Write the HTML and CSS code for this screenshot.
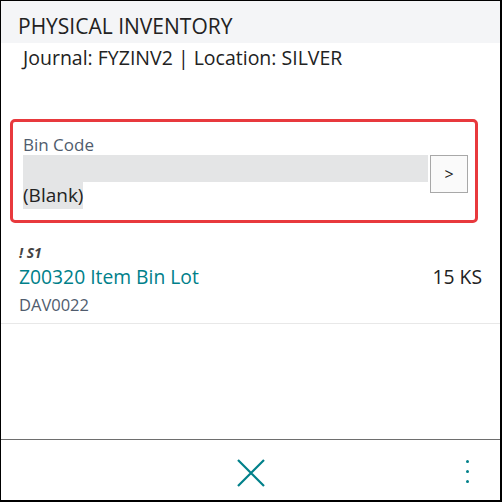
FILE: index.html
```html
<!DOCTYPE html>
<html lang="en">
<head>
  <meta charset="UTF-8">
  <title>Physical Inventory</title>
  <link rel="stylesheet" href="styles.css">
</head>
<body>
  <div class="frame">
    <div class="header">PHYSICAL INVENTORY</div>
    <div class="subtitle">Journal: FYZINV2 | Location: SILVER</div>

    <div class="bin-box">
      <div class="bin-label">Bin Code</div>
      <div class="bin-row">
        <div class="bin-field">
          <div class="bin-fill"></div>
          <span class="bin-value">(Blank)</span>
        </div>
        <button class="bin-btn">&gt;</button>
      </div>
    </div>

    <div class="item">
      <div class="item-tag">! S1</div>
      <div class="item-row">
        <span class="item-name">Z00320 Item Bin Lot</span>
        <span class="item-qty">15 KS</span>
      </div>
      <div class="item-lot">DAV0022</div>
    </div>

    <div class="spacer"></div>

    <div class="footer">
      <svg class="close-icon" width="28" height="28" viewBox="0 0 28 28">
        <path d="M1 1 L27 27 M27 1 L1 27" stroke="#00808a" stroke-width="2.2" fill="none"/>
      </svg>
      <div class="more">
        <span></span><span></span><span></span>
      </div>
    </div>
  </div>
</body>
</html>
```

FILE: styles.css
```css
html, body {
  margin: 0;
  padding: 0;
  background: #fff;
}
body {
  font-family: 'Open Sans', 'Noto Sans', sans-serif;
  color: #212121;
}
.frame {
  width: 502px;
  height: 502px;
  box-sizing: border-box;
  border-style: solid;
  border-color: #000;
  border-width: 1px 2px 2px 1px;
  display: flex;
  flex-direction: column;
}
.header {
  background: #f4f5f7;
  height: 42px;
  line-height: 50px;
  padding-left: 17px;
  font-size: 21px;
  color: #222;
  overflow: hidden;
}
.subtitle {
  padding-left: 22px;
  font-size: 19.5px;
  line-height: 30px;
  color: #222;
}
.bin-box {
  margin: 46px 22px 0 9px;
  border: 3px solid #e8393d;
  border-radius: 5px;
  padding: 12px 7px 11px 10px;
}
.bin-label {
  font-size: 17px;
  color: #505c6d;
  line-height: 21px;
}
.bin-row {
  display: flex;
  align-items: flex-start;
}
.bin-field {
  flex: 1;
}
.bin-fill {
  height: 27px;
  background: #e4e5e6;
}
.bin-value {
  display: inline-block;
  background: #e4e5e6;
  font-size: 19px;
  line-height: 27px;
  color: #222;
}
.bin-btn {
  width: 38px;
  height: 38px;
  margin-left: 2px;
  border: 1px solid #a8a8a8;
  background: #fafafa;
  font-family: 'Open Sans', sans-serif;
  font-size: 16px;
  color: #222;
  padding: 0;
}
.item {
  margin-top: 20px;
  padding: 0 18px 4px 18px;
  border-bottom: 1px solid #e8e8e8;
}
.item-tag {
  font-size: 14px;
  font-weight: bold;
  font-style: italic;
  color: #444;
  line-height: 20px;
}
.item-row {
  display: flex;
  justify-content: space-between;
  font-size: 19.3px;
  line-height: 28px;
}
.item-name {
  color: #00808a;
}
.item-qty {
  color: #222;
}
.item-lot {
  font-size: 16.5px;
  color: #505c6d;
  line-height: 28px;
}
.spacer {
  flex: 1;
}
.footer {
  height: 61px;
  box-sizing: border-box;
  padding-top: 6px;
  border-top: 1px solid #6e6e6e;
  position: relative;
  display: flex;
  justify-content: center;
  align-items: center;
}
.more {
  position: absolute;
  right: 31px;
  top: 20px;
  display: flex;
  flex-direction: column;
  gap: 7px;
}
.more span {
  width: 3px;
  height: 3px;
  border-radius: 50%;
  background: #00808a;
}
```
